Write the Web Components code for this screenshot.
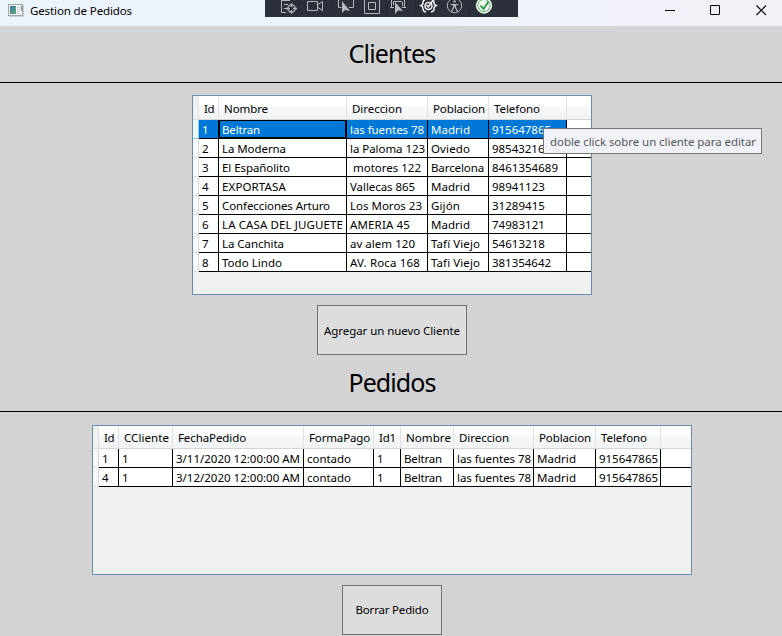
<!DOCTYPE html>
<html lang="es"><head><meta charset="utf-8"><title>Gestion de Pedidos</title>
<style>
html,body{margin:0;width:782px;height:636px;overflow:hidden;background:#d3d3d3}
body{font:11.5px "Noto Sans","Open Sans",sans-serif;color:#000}
</style></head><body>
<main-window></main-window>
<script>
// Text whose advance is adjusted by letter spacing to a given width.
class FitText extends HTMLElement{
  connectedCallback(){
    const r=this.attachShadow({mode:'open'});
    r.innerHTML='<style>:host{display:inline-block;white-space:pre;flex:none}span{display:inline-block}</style><span></span>';
    const s=r.querySelector('span');s.textContent=this.getAttribute('text');
    const w=+this.getAttribute('w');
    if(w){
      const d=(w-s.getBoundingClientRect().width)/s.textContent.length;
      s.style.letterSpacing=d.toFixed(3)+'px';
    }
  }
}
customElements.define('fit-text',FitText);

class TitleBar extends HTMLElement{
  constructor(){super();this.attachShadow({mode:'open'}).innerHTML=`<style>
  :host{display:flex;height:26px;background:linear-gradient(90deg,#edf3fb 0,#edf3fb 45%,#f1f2f8 90%);box-sizing:border-box;padding-left:8px;position:relative}
  .app{margin-top:4px;margin-right:6px;flex:none}
  .name{margin-top:2px;line-height:17px;flex:1}
  .ctl{flex:none;width:120px;height:26px}
  .dbg{position:absolute;left:265px;top:0}
  </style>
  <svg class="app" width="16" height="13"><rect x=".5" y=".5" width="14" height="11" fill="#f5f5f5" stroke="#a0a5ab"/><path d="M15.5 1v11.500H1" stroke="#c9ccd0" fill="none"/><defs><linearGradient id="a" x2="1" y2="1"><stop stop-color="#3f74a8"/><stop offset="1" stop-color="#5bb079"/></linearGradient></defs><rect x="2" y="2" width="6" height="8" fill="url(#a)"/><path d="M9 3.500h3M9 5.500h3M9 7.500h3M9 9.500h3" stroke="#c8cbd0"/><path d="M13.500 2v5" stroke="#6e9f8c"/></svg>
  <div class="name"><fit-text text="Gestion de Pedidos" w="102"></fit-text></div>
  <svg class="dbg" width="253" height="17" fill="none" stroke="#b4b7bc"><rect width="253" height="17" fill="#2c303b" stroke="none"/>
   <path d="M66.500 1v13M121.500 1v13M150.500 1v13M204.500 1v13" stroke="#252933"/>
   <path d="M16 .5h9M16.500 0v13M16 12.500h5M19 4.500h4M19 8.500h2"/><circle cx="26.500" cy="8.500" r="3.700" stroke-width="1.300"/><path d="M26.500 3v4M26.500 10v4M21 8.500h4M28 8.500h4" stroke-width="1.300"/>
   <path d="M42.500 1.500h10v9h-10zM53 4.500l4.500-3v9l-4.500-3"/>
   <path d="M76.500 0M73.500 0v7.500h3M84 7.500h4.500V0"/><path d="M77 1v12l3-3 5 1z" fill="#b4b7bc" stroke="none"/>
   <path d="M99.500 -1v14.500h15V-1M103.500 2.500h7v7h-7z"/>
   <path d="M126.500 0v7M125 7.500h4M137 7.500h4M139.500 0v7M128 1.500h9M128.500 2v3M137.500 2v4"/><path d="M130 2v12l3-3.500 5 .5z" fill="#b4b7bc" stroke="none"/>
   <g stroke="#f2f2f2" stroke-width="1.500"><path d="M160 0q-2 0-2 2.500t-2 3q2 1 2 3.500t3 3M167 0q2 0 2 2.500t2 3q-2 1-2 3.500t-3 3"/><circle cx="163.500" cy="6" r="3.500"/><path d="M161.500 5l1.800 2 4.500-6.500"/></g>
   <circle cx="189.500" cy="5.500" r="7.200"/><circle cx="189.500" cy="1.500" r="1.200" fill="#b4b7bc" stroke="none"/><path d="M185.500 4.500h8M189.500 4v3M188.500 4.500v3l-2 4M190.500 4.500v3l2 4" stroke-width="1.200"/>
   <circle cx="219" cy="5.500" r="7.700" fill="#f2f6f1" stroke="#e7eee7"/><circle cx="219" cy="5.500" r="6.100" stroke="#56b568"/><path d="M215.500 5.500l3 3.500 5-7.500" stroke="#229b3a" stroke-width="1.800"/>
  </svg>
  <svg class="ctl" fill="none" stroke="#000"><path d="M3 10.500h10"/><rect x="48.500" y="5.500" width="9" height="9" rx=".5"/><path d="M94.500 5.500l9.500 9.500M104 5.500l-9.500 9.500" stroke-width="1.100"/></svg>`}
}
customElements.define('title-bar',TitleBar);

class SectionTitle extends HTMLElement{
  connectedCallback(){this.attachShadow({mode:'open'}).innerHTML=`<style>
  :host{display:flex;justify-content:center;box-sizing:border-box;height:57px;border-bottom:1px solid #000;font-size:25px;line-height:34px;padding:10px 0 0 2px}</style>
  <fit-text text="${this.getAttribute('text')}" w="${this.getAttribute('w')}"></fit-text>`}
}
customElements.define('section-title',SectionTitle);

class PushButton extends HTMLElement{
  connectedCallback(){this.attachShadow({mode:'open'}).innerHTML=`<style>
  :host{display:flex;align-items:center;justify-content:center;box-sizing:border-box;height:50px;margin:10px auto 0;border:1px solid #707070;background:#ddd}</style>
  <fit-text text="${this.getAttribute('text')}" w="${this.getAttribute('w')}"></fit-text>`}
}
customElements.define('push-button',PushButton);

class DataGrid extends HTMLElement{
  set data({cols,head,headH,headTop,rows,selected}){
    const t=([s,w])=>`<fit-text text="${s}" w="${w}"></fit-text>`;
    this.attachShadow({mode:'open'}).innerHTML=`<style>
    :host{display:block;box-sizing:border-box;border:1px solid #688caf;background:#f0f0f0;margin:0 auto;overflow:hidden}
    .row{display:grid;grid-template-columns:6px ${cols.map(c=>c+'px').join(' ')} 1fr;height:19px;line-height:16px}
    .row>*{box-sizing:border-box;overflow:hidden}
    .rh{background:#f7f8f9;border-right:1px solid #d5d5d5;border-bottom:1px solid #e2e2e2}
    .c{background:#fff;border-right:1px solid #000;border-bottom:1px solid #000;padding:2px 0 0 3px}
    .c:last-child{border-right:0}
    .head{height:${headH}px;line-height:17px;background:linear-gradient(#fff 0,#fff 40%,#f7f8fa 41%,#f1f2f4 100%)}
    .h{border-right:1px solid #dfe1e4;border-bottom:1px solid #d5d5d5;padding:${headTop}px 0 0 5px}
    .h:last-child{border-right:0}
    .h:first-child{background:#f0f0f0;border-bottom-color:#e2e2e2}
    .sel .c:not(:last-child){background:#0078d7;color:#fff}
    .sel .c:nth-child(3){box-shadow:inset 0 0 0 1px #000}
    .sel .rh{background:#eefaff;border-color:#7fd0f5}
    </style><div class="row head"><div class="h"></div>${head.map(h=>`<div class="h">${t(h)}</div>`).join('')}<div class="h"></div></div>
    ${rows.map((r,i)=>`<div class="row ${i===selected?'sel':''}"><div class="rh"></div>${r.map(c=>`<div class="c">${t(c)}</div>`).join('')}<div class="c"></div></div>`).join('')}`;
  }
}
customElements.define('data-grid',DataGrid);

class ToolTip extends HTMLElement{
  connectedCallback(){this.attachShadow({mode:'open'}).innerHTML=`<style>
  :host{position:absolute;left:543px;top:128px;width:219px;height:26px;box-sizing:border-box;border:1px solid #767676;background:#f1f2f7;color:#575757;padding:5px 0 0 6px;line-height:16px}</style>
  <fit-text text="doble click sobre un cliente para editar" w="206"></fit-text>`}
}
customElements.define('tool-tip',ToolTip);

class MainWindow extends HTMLElement{
  connectedCallback(){
    const r=this.attachShadow({mode:'open'});
    r.innerHTML=`<style>:host{display:flex;flex-direction:column;width:782px;height:636px;background:#d3d3d3;position:relative;overflow:hidden}
    #clientes{width:400px;height:200px;margin-top:12px}#pedidos{width:600px;height:150px;margin-top:13px}
    main{display:flex;flex-direction:column;padding-left:2px}
    .add{width:150px}.del{width:100px;padding-bottom:2px}</style>
    <title-bar></title-bar>
    <section-title text="Clientes" w="87"></section-title>
    <main><data-grid id="clientes"></data-grid>
    <push-button class="add" text="Agregar un nuevo Cliente" w="136"></push-button></main>
    <section-title text="Pedidos" w="87"></section-title>
    <main><data-grid id="pedidos"></data-grid>
    <push-button class="del" text="Borrar Pedido" w="73"></push-button></main>
    <tool-tip></tool-tip>`;
    r.getElementById('clientes').data={cols:[20,128,81,61,78],headH:24,headTop:4,selected:0,
      head:[['Id',10],['Nombre',44],['Direccion',50],['Poblacion',52],['Telefono',46]],
      rows:[
      [['1',7],['Beltran',38],['las fuentes 78',74],['Madrid',39],['915647865',59]],
      [['2',7],['La Moderna',64],['la Paloma 123',75],['Oviedo',39],['985432165',59]],
      [['3',7],['El Españolito',68],[' motores 122',71],['Barcelona',53],['8461354689',66]],
      [['4',7],['EXPORTASA',64],['Vallecas 865',65],['Madrid',39],['98941123',53]],
      [['5',7],['Confecciones Arturo',108],['Los Moros 23',72],['Gijón',29],['31289415',53]],
      [['6',7],['LA CASA DEL JUGUETE',121],['AMERIA 45',60],['Madrid',39],['74983121',53]],
      [['7',7],['La Canchita',62],['av alem 120',65],['Tafí Viejo',49],['54613218',53]],
      [['8',7],['Todo Lindo',60],['AV. Roca 168',70],['Tafi Viejo',49],['381354642',59]]]};
    const tail=[['1',7],['Beltran',38],['las fuentes 78',74],['Madrid',39],['915647865',59]];
    r.getElementById('pedidos').data={cols:[20,54,131,70,27,53,80,62,65],headH:23,headTop:3,
      head:[['Id',10],['CCliente',45],['FechaPedido',68],['FormaPago',61],['Id1',17],['Nombre',45],['Direccion',50],['Poblacion',52],['Telefono',46]],
      rows:[
      [['1',7],['1',7],['3/11/2020 12:00:00 AM',124],['contado',44],...tail],
      [['4',7],['1',7],['3/12/2020 12:00:00 AM',124],['contado',44],...tail]]};
  }
}
customElements.define('main-window',MainWindow);
</script></body></html>
